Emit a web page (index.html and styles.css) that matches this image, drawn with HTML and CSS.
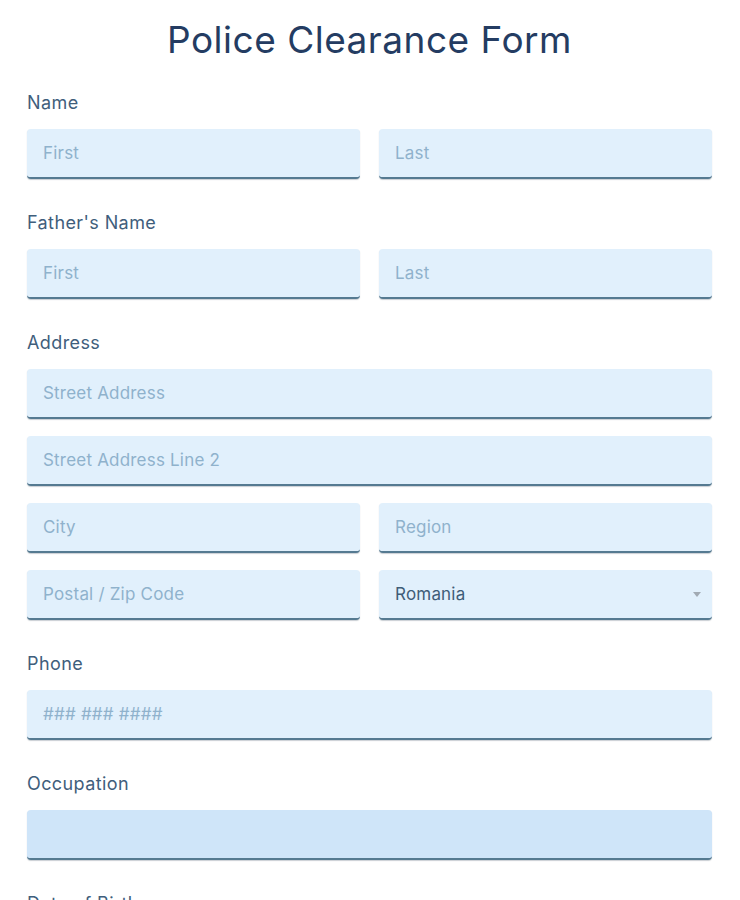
FILE: index.html
```html
<!DOCTYPE html>
<html lang="en">
<head>
<meta charset="utf-8">
<title>Police Clearance Form</title>
<link rel="stylesheet" href="styles.css">
</head>
<body>
<main class="form">
  <h1 class="title">Police Clearance Form</h1>

  <section class="group">
    <div class="label">Name</div>
    <div class="row two">
      <div class="input"><span class="ph">First</span></div>
      <div class="input"><span class="ph">Last</span></div>
    </div>
  </section>

  <section class="group">
    <div class="label">Father's Name</div>
    <div class="row two">
      <div class="input"><span class="ph">First</span></div>
      <div class="input"><span class="ph">Last</span></div>
    </div>
  </section>

  <section class="group">
    <div class="label">Address</div>
    <div class="stack">
      <div class="input"><span class="ph">Street Address</span></div>
      <div class="input"><span class="ph">Street Address Line 2</span></div>
      <div class="row two">
        <div class="input"><span class="ph">City</span></div>
        <div class="input"><span class="ph">Region</span></div>
      </div>
      <div class="row two">
        <div class="input"><span class="ph">Postal / Zip Code</span></div>
        <div class="input select"><span class="val">Romania</span><span class="caret"></span></div>
      </div>
    </div>
  </section>

  <section class="group">
    <div class="label">Phone</div>
    <div class="input"><span class="ph">### ### ####</span></div>
  </section>

  <section class="group">
    <div class="label">Occupation</div>
    <div class="input focused"></div>
  </section>

  <section class="group">
    <div class="label">Date of Birth</div>
    <div class="input"></div>
  </section>
</main>
</body>
</html>
```

FILE: styles.css
```css
html, body {
  margin: 0;
  padding: 0;
  background: #ffffff;
}
body {
  font-family: Inter, "Open Sans", "Liberation Sans", sans-serif;
}
.form {
  padding: 18px 28px 0 27px;
}
.title {
  margin: 0 0 29px;
  font-size: 37px;
  line-height: 44px;
  font-weight: 400;
  color: #243c62;
  text-align: center;
  letter-spacing: 0.5px;
}
.group {
  margin-bottom: 32px;
}
.group.tight {
  margin-bottom: 30px;
}
.label {
  font-size: 18px;
  line-height: 24px;
  color: #3f5e7c;
  letter-spacing: 0.4px;
  margin-bottom: 14px;
}
.stack {
  display: flex;
  flex-direction: column;
  gap: 17px;
}
.row.two {
  display: grid;
  grid-template-columns: 1fr 1fr;
  gap: 19px;
}
.input {
  box-sizing: border-box;
  height: 50px;
  background: #e1f0fc;
  border-radius: 4px;
  border-bottom: 2px solid #557a91;
  box-shadow: 0 1px 1px rgba(40, 60, 80, 0.25);
  display: flex;
  align-items: center;
  padding: 0 16px;
  font-size: 17px;
  letter-spacing: 0.2px;
}
.input.focused {
  background: #cfe5f9;
}
.ph {
  color: #8fb2cc;
}
.val {
  color: #3e5d78;
}
.select {
  justify-content: space-between;
  padding-right: 11px;
}
.caret {
  width: 0;
  height: 0;
  border-left: 4px solid transparent;
  border-right: 4px solid transparent;
  border-top: 5px solid #a1aab3;
}
```
